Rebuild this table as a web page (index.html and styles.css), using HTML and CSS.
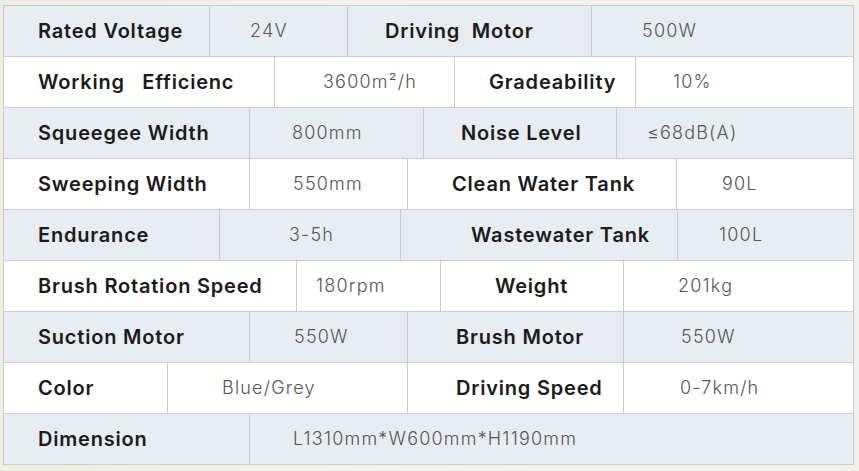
FILE: index.html
```html
<!DOCTYPE html>
<html>
<head>
<meta charset="utf-8">
<link rel="stylesheet" href="styles.css">
</head>
<body>
<div class="spec">
  <div class="row r1 alt"><div class="c k">Rated Voltage</div><div class="c v">24V</div><div class="c k">Driving&nbsp; Motor</div><div class="c v">500W</div></div>
  <div class="row r2"><div class="c k">Working&nbsp;&nbsp; Efficienc</div><div class="c v">3600m²/h</div><div class="c k">Gradeability</div><div class="c v">10%</div></div>
  <div class="row r3 alt"><div class="c k">Squeegee Width</div><div class="c v">800mm</div><div class="c k">Noise Level</div><div class="c v">≤68dB(A)</div></div>
  <div class="row r4"><div class="c k">Sweeping Width</div><div class="c v">550mm</div><div class="c k">Clean Water Tank</div><div class="c v">90L</div></div>
  <div class="row r5 alt"><div class="c k">Endurance</div><div class="c v">3-5h</div><div class="c k">Wastewater Tank</div><div class="c v">100L</div></div>
  <div class="row r6"><div class="c k">Brush Rotation Speed</div><div class="c v">180rpm</div><div class="c k">Weight</div><div class="c v">201kg</div></div>
  <div class="row r7 alt"><div class="c k">Suction Motor</div><div class="c v">550W</div><div class="c k">Brush Motor</div><div class="c v">550W</div></div>
  <div class="row r8"><div class="c k">Color</div><div class="c v">Blue/Grey</div><div class="c k">Driving Speed</div><div class="c v">0-7km/h</div></div>
  <div class="row r9 alt"><div class="c k">Dimension</div><div class="c v">L1310mm*W600mm*H1190mm</div></div>
</div>
</body>
</html>
```
FILE: styles.css
```css
* { box-sizing: border-box; }
html, body { margin: 0; padding: 0; }
body {
  width: 859px;
  height: 471px;
  overflow: hidden;
  background: linear-gradient(90deg, #efeee2 0%, #f3f2ec 40%, #f1f0ea 100%);
  padding: 5px 0 0 3px;
}
.spec {
  width: 851px;
  border: 1px solid #cbcbcb;
  background: #ffffff;
}
.row {
  display: grid;
  height: 51px;
  border-top: 1px solid #cbcbcb;
  background: #ffffff;
}
.row:first-child { border-top: 0; height: 50px; }
.row.alt { background: #e8edf4; }
.c {
  display: flex;
  align-items: center;
  white-space: nowrap;
  border-left: 1px solid #cbcbcb;
  padding-bottom: 1px;
}
.c:first-child { border-left: 0; padding-left: 34px; }
.k {
  font-family: Inter, "Noto Sans", sans-serif;
  font-weight: 600;
  font-size: 20px;
  letter-spacing: 0.8px;
  color: #1b1b1b;
}
.v {
  font-family: Inter, "Noto Sans", sans-serif;
  font-weight: 300;
  font-size: 18px;
  letter-spacing: 1.2px;
  color: #555555;
}
.r1 { grid-template-columns: 205px 138px 244px 1fr; }
.r2 { grid-template-columns: 270px 180px 181px 1fr; }
.r3 { grid-template-columns: 245px 174px 193px 1fr; }
.r4 { grid-template-columns: 245px 158px 269px 1fr; }
.r5 { grid-template-columns: 215px 181px 277px 1fr; }
.r6 { grid-template-columns: 292px 144px 183px 1fr; }
.r7 { grid-template-columns: 245px 158px 216px 1fr; }
.r8 { grid-template-columns: 163px 240px 216px 1fr; }
.r9 { grid-template-columns: 245px 1fr; }

.r1 .c:nth-child(2) { padding-left: 40px; }
.r1 .c:nth-child(3) { padding-left: 37px; }
.r1 .c:nth-child(4) { padding-left: 50px; }
.r2 .c:nth-child(2) { padding-left: 48px; }
.r2 .c:nth-child(3) { padding-left: 34px; }
.r2 .c:nth-child(4) { padding-left: 37px; }
.r3 .c:nth-child(2) { padding-left: 42px; }
.r3 .c:nth-child(3) { padding-left: 37px; }
.r3 .c:nth-child(4) { padding-left: 30px; }
.r4 .c:nth-child(2) { padding-left: 43px; }
.r4 .c:nth-child(3) { padding-left: 44px; }
.r4 .c:nth-child(4) { padding-left: 45px; }
.r5 .c:nth-child(2) { padding-left: 69px; }
.r5 .c:nth-child(3) { padding-left: 70px; }
.r5 .c:nth-child(4) { padding-left: 41px; }
.r6 .c:nth-child(2) { padding-left: 19px; }
.r6 .c:nth-child(3) { padding-left: 54px; }
.r6 .c:nth-child(4) { padding-left: 54px; }
.r7 .c:nth-child(2) { padding-left: 44px; }
.r7 .c:nth-child(3) { padding-left: 48px; }
.r7 .c:nth-child(4) { padding-left: 57px; }
.r8 .c:nth-child(2) { padding-left: 54px; }
.r8 .c:nth-child(3) { padding-left: 48px; }
.r8 .c:nth-child(4) { padding-left: 56px; }
.r9 .c:nth-child(2) { padding-left: 43px; }
```
